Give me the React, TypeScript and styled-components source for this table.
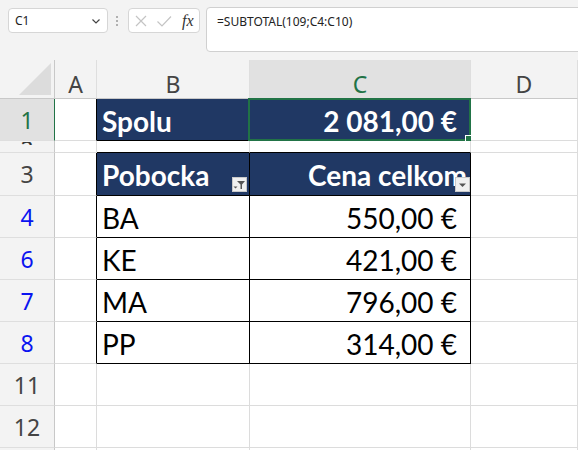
import * as React from "react";
import styled, { createGlobalStyle } from "styled-components";

const Global = createGlobalStyle`
  html, body { margin: 0; padding: 0; background: #f3f3f3; }
  body { font-family: "Noto Sans", "Open Sans", sans-serif; }
`;

const NAVY = "#203864";
const GRID = "#dcdcdc";
const GREEN = "#217346";

const Page = styled.div`
  width: 578px;
  height: 450px;
  overflow: hidden;
  background: #f3f3f3;
`;

const Toolbar = styled.div`
  height: 60px;
  box-sizing: border-box;
  padding: 7px 0 0 8px;
  display: flex;
  align-items: flex-start;
`;

const NameBox = styled.div`
  margin-top: 1px;
  width: 100px;
  height: 25px;
  box-sizing: border-box;
  background: #fff;
  border: 1px solid #d6d6d6;
  border-radius: 4px;
  display: flex;
  align-items: center;
  justify-content: space-between;
  padding: 0 6px 0 6px;
  font-size: 12px;
  color: #222;
`;

const Dots = styled.div`
  margin: 9px 10px 0 8px;
  display: flex;
  flex-direction: column;
  gap: 2px;
  span {
    width: 2px;
    height: 2px;
    border-radius: 1px;
    background: #9a9a9a;
  }
`;

const FxBox = styled.div`
  margin-top: 1px;
  width: 72px;
  height: 25px;
  box-sizing: border-box;
  background: #fff;
  border: 1px solid #d6d6d6;
  border-radius: 4px;
  display: flex;
  align-items: center;
  padding: 0 4px 0 5px;
  gap: 8px;
`;

const Fx = styled.span`
  font-family: "Liberation Serif", serif;
  font-style: italic;
  font-size: 16px;
  color: #333;
  margin-left: 2px;
`;

const Formula = styled.div`
  margin-left: 6px;
  flex: 1;
  margin-right: -10px;
  height: 45px;
  box-sizing: border-box;
  background: #fff;
  border: 1px solid #d0d0d0;
  border-radius: 4px;
  padding: 5px 10px;
  font-size: 12px;
  color: #222;
`;

const Sheet = styled.div`
  display: grid;
  grid-template-columns: 55px 42px 153px 221px 1fr;
  grid-template-rows: 39px 42px 12px 43px 42px 42px 42px 42px 42px 42px 10px;
  background: #fff;
`;

const Corner = styled.div`
  background: #f3f3f3;
  border-right: 1px solid #c8c8c8;
  border-bottom: 1px solid #c8c8c8;
  display: flex;
  align-items: flex-end;
  justify-content: flex-end;
  padding: 0 3px 3px 0;
`;

const ColHead = styled.div<{ $sel?: boolean }>`
  background: ${(p) => (p.$sel ? "#e1e1e1" : "#f3f3f3")};
  border-right: 1px solid #dedede;
  border-bottom: 1px solid #c8c8c8;
  display: flex;
  justify-content: center;
  align-items: flex-end;
  padding-bottom: 2px;
  font-size: 23px;
  line-height: 24px;
  color: ${(p) => (p.$sel ? GREEN : "#444")};
`;

const RowHead = styled.div<{ $tone?: "sel" | "blue" | "plain" }>`
  background: ${(p) => (p.$tone === "sel" ? "#e1e1e1" : "#f3f3f3")};
  border-right: 1px solid ${(p) => (p.$tone === "sel" ? GREEN : "#c8c8c8")};
  border-bottom: 1px solid #dedede;
  display: flex;
  justify-content: center;
  align-items: center;
  overflow: hidden;
  font-size: 23px;
  color: ${(p) =>
    p.$tone === "sel" ? GREEN : p.$tone === "blue" ? "#0a14f0" : "#444"};
`;

const Clip = styled.span`
  height: 3px;
  overflow: hidden;
  align-self: flex-start;
  margin-top: 1px;
  line-height: 1;
  display: block;
  span {
    display: block;
    margin-top: -4px;
    color: #333;
  }
`;

const Cell = styled.div<{
  $fill?: boolean;
  $r?: string;
  $b?: string;
  $right?: boolean;
  $bold?: boolean;
}>`
  position: relative;
  background: ${(p) => (p.$fill ? NAVY : "#fff")};
  border-right: 1px solid ${(p) => p.$r || GRID};
  border-bottom: 1px solid ${(p) => p.$b || GRID};
  display: flex;
  align-items: center;
  justify-content: ${(p) => (p.$right ? "flex-end" : "flex-start")};
  padding: 2px ${(p) => (p.$right ? "13px" : "0")} 0 5px;
  font-family: Lato, "Open Sans", sans-serif;
  font-size: 28px;
  font-weight: ${(p) => (p.$bold ? 700 : 400)};
  color: ${(p) => (p.$fill ? "#fff" : "#000")};
  white-space: nowrap;
`;

const Selection = styled.div`
  position: absolute;
  left: -2px;
  top: -1px;
  right: -1px;
  bottom: -1px;
  border: 2px solid ${GREEN};
  pointer-events: none;
`;

const Handle = styled.div`
  position: absolute;
  right: -4px;
  bottom: -4px;
  width: 6px;
  height: 6px;
  background: ${GREEN};
  border: 1px solid #fff;
`;

const FilterBtn = styled.div<{ $edge: number }>`
  position: absolute;
  right: ${(p) => p.$edge}px;
  bottom: 3px;
  width: 15px;
  height: 15px;
  box-sizing: border-box;
  background: #f0f0f0;
  border: 1px solid #c9c9c9;
  display: flex;
  align-items: center;
  justify-content: center;
`;

const Chevron = () => (
  <svg width="10" height="10" viewBox="0 0 10 10">
    <path d="M1.5 3.5 L5 7 L8.5 3.5" fill="none" stroke="#444" strokeWidth="1.2" />
  </svg>
);

const Cross = () => (
  <svg width="14" height="14" viewBox="0 0 14 14">
    <path d="M2 2 L12 12 M12 2 L2 12" stroke="#c4c4c4" strokeWidth="1.2" />
  </svg>
);

const Tick = () => (
  <svg width="16" height="14" viewBox="0 0 16 14">
    <path d="M1.5 7.5 L6 12 L15 2.5" fill="none" stroke="#c4c4c4" strokeWidth="1.2" />
  </svg>
);

const FunnelIcon = () => (
  <svg width="13" height="13" viewBox="0 0 13 13">
    <path d="M4 3 H12 L9 6.5 V11 H7.5 V6.5 Z" fill="#555" />
    <path d="M0.5 8.5 H4.5 L2.5 10.5 Z" fill="#555" />
  </svg>
);

const ArrowIcon = () => (
  <svg width="9" height="6" viewBox="0 0 9 6">
    <path d="M1 1.5 H8 L4.5 5 Z" fill="#555" />
  </svg>
);

const CornerMark = () => (
  <svg width="32" height="32" viewBox="0 0 32 32">
    <path d="M32 0 V32 H0 Z" fill="#dcdcdc" />
  </svg>
);

type Row = {
  num: string;
  tone?: "sel" | "blue" | "plain";
  b?: string;
  c?: string;
  kind: "total" | "gap" | "head" | "data" | "empty";
};

const rows: Row[] = [
  { num: "1", tone: "sel", b: "Spolu", c: "2 081,00 €", kind: "total" },
  { num: "2", kind: "gap" },
  { num: "3", b: "Pobocka", c: "Cena celkom", kind: "head" },
  { num: "4", tone: "blue", b: "BA", c: "550,00 €", kind: "data" },
  { num: "6", tone: "blue", b: "KE", c: "421,00 €", kind: "data" },
  { num: "7", tone: "blue", b: "MA", c: "796,00 €", kind: "data" },
  { num: "8", tone: "blue", b: "PP", c: "314,00 €", kind: "data" },
  { num: "11", kind: "empty" },
  { num: "12", kind: "empty" },
  { num: "", kind: "empty" },
];

const App = () => {
  return (
    <Page>
      <Global />
      <Toolbar>
        <NameBox>
          <span>C1</span>
          <Chevron />
        </NameBox>
        <Dots>
          <span />
          <span />
          <span />
        </Dots>
        <FxBox>
          <Cross />
          <Tick />
          <Fx>fx</Fx>
        </FxBox>
        <Formula>=SUBTOTAL(109;C4:C10)</Formula>
      </Toolbar>

      <Sheet>
        <Corner>
          <CornerMark />
        </Corner>
        <ColHead>A</ColHead>
        <ColHead>B</ColHead>
        <ColHead $sel>C</ColHead>
        <ColHead>D</ColHead>

        {rows.map((r, i) => {
          const inTable = r.kind === "total" || r.kind === "head" || r.kind === "data";
          const edge = inTable ? "#000" : undefined;
          const gapEdge = r.kind === "gap" ? "#000" : undefined;
          return (
            <React.Fragment key={i}>
              <RowHead $tone={r.tone}>
                {r.kind === "gap" ? (
                  <Clip>
                    <span>{r.num}</span>
                  </Clip>
                ) : (
                  r.num
                )}
              </RowHead>
              <Cell $r={edge} />
              <Cell
                $fill={r.kind === "total" || r.kind === "head"}
                $bold={r.kind === "total" || r.kind === "head"}
                $r={edge}
                $b={edge || gapEdge}
              >
                {r.b}
                {r.kind === "head" && (
                  <FilterBtn $edge={2}>
                    <FunnelIcon />
                  </FilterBtn>
                )}
              </Cell>
              <Cell
                $fill={r.kind === "total" || r.kind === "head"}
                $bold={r.kind === "total" || r.kind === "head"}
                $r={edge}
                $b={edge || gapEdge}
                $right
                style={r.kind === "head" ? { paddingRight: 3 } : undefined}
              >
                {r.c}
                {r.kind === "total" && (
                  <Selection>
                    <Handle />
                  </Selection>
                )}
                {r.kind === "head" && (
                  <FilterBtn $edge={0}>
                    <ArrowIcon />
                  </FilterBtn>
                )}
              </Cell>
              <Cell />
            </React.Fragment>
          );
        })}
      </Sheet>
    </Page>
  );
};

export default App;
